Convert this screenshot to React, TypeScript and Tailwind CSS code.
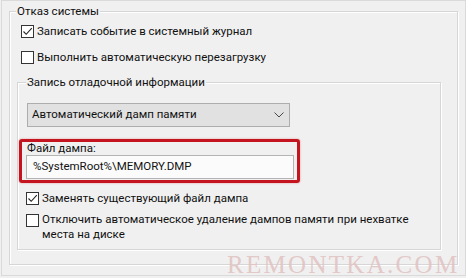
import React from "react";

function CheckBox({ checked }: { checked?: boolean }) {
  return (
    <span className="flex h-[13px] w-[13px] shrink-0 items-center justify-center border border-[#333333] bg-white">
      {checked && (
        <svg width="11" height="11" viewBox="0 0 11 11" fill="none">
          <path d="M1.5 5.5 L4.2 8.3 L9.8 2.2" stroke="#222222" strokeWidth="1.1" />
        </svg>
      )}
    </span>
  );
}

function CheckRow({ checked, children }: { checked?: boolean; children: React.ReactNode }) {
  return (
    <div className="flex h-[26px] items-center gap-[3px]">
      <CheckBox checked={checked} />
      <span className="whitespace-nowrap leading-[15px]">{children}</span>
    </div>
  );
}

export default function App() {
  return (
    <div className="relative h-[278px] w-[466px] overflow-hidden bg-[#f0f0f0] font-['Roboto',sans-serif] text-[11.5px] text-[#111111]">
      <div className="ml-[1px] h-[276px] w-[465px] border border-[#dadada] pl-[7px] pt-[10px]">
        {/* Отказ системы */}
        <div className="relative h-[254px] w-[449px] border border-[#d6d6d6] shadow-[1px_1px_0_#ffffff,inset_1px_1px_0_#ffffff]">
          <span className="absolute -top-[8px] left-[6px] bg-[#f0f0f0] px-[1px] leading-[14px]">
            Отказ системы
          </span>

          <div className="pl-[11px] pt-[6px]">
            <CheckRow checked>Записать событие в системный журнал</CheckRow>
            <CheckRow>Выполнить автоматическую перезагрузку</CheckRow>
          </div>

          {/* Запись отладочной информации */}
          <div className="relative ml-[7px] mt-[12px] h-[168px] w-[424px] border border-[#d6d6d6] shadow-[1px_1px_0_#ffffff,inset_1px_1px_0_#ffffff]">
            <span className="absolute -top-[8px] left-[8px] bg-[#f0f0f0] px-[1px] leading-[14px]">
              Запись отладочной информации
            </span>

            <div className="ml-[9px] mt-[20px] flex h-[24px] w-[263px] items-center justify-between border border-[#adadad] bg-[#e1e1e1] pl-[4px] pr-[5px]">
              <span>Автоматический дамп памяти</span>
              <svg width="10" height="6" viewBox="0 0 10 6" fill="none">
                <path d="M0.5 0.5 L5 5 L9.5 0.5" stroke="#4a4a4a" strokeWidth="1" />
              </svg>
            </div>

            <div className="ml-[1px] mt-[12px] h-[44px] w-[281px] rounded-[3px] border-[3px] border-[#c3141f] shadow-[0_0_2px_#e88a8a]">
              <div className="pl-[5px] leading-[13px]">Файл дампа:</div>
              <div className="ml-[4px] flex h-[24px] w-[268px] items-center border border-[#b4b4b4] bg-[#fbfbfb] pl-[6px]">
                %SystemRoot%\MEMORY.DMP
              </div>
            </div>

            <div className="pl-[8px] pt-[2px]">
              <CheckRow checked>Заменять существующий файл дампа</CheckRow>
              <div className="flex items-start gap-[3px] pt-[1px]">
                <span className="mt-[2px]">
                  <CheckBox />
                </span>
                <div className="whitespace-nowrap leading-[15px]">
                  <div>Отключить автоматическое удаление дампов памяти при нехватке</div>
                  <div>места на диске</div>
                </div>
              </div>
            </div>
          </div>
        </div>
      </div>

      {/* watermark */}
      <div className="pointer-events-none absolute left-[227px] top-[253px] font-['Liberation_Serif',serif] text-[25px] leading-[24px] tracking-[2.3px] text-[#e2c4c4] opacity-90">
        REMONTKA.COM
      </div>
    </div>
  );
}
